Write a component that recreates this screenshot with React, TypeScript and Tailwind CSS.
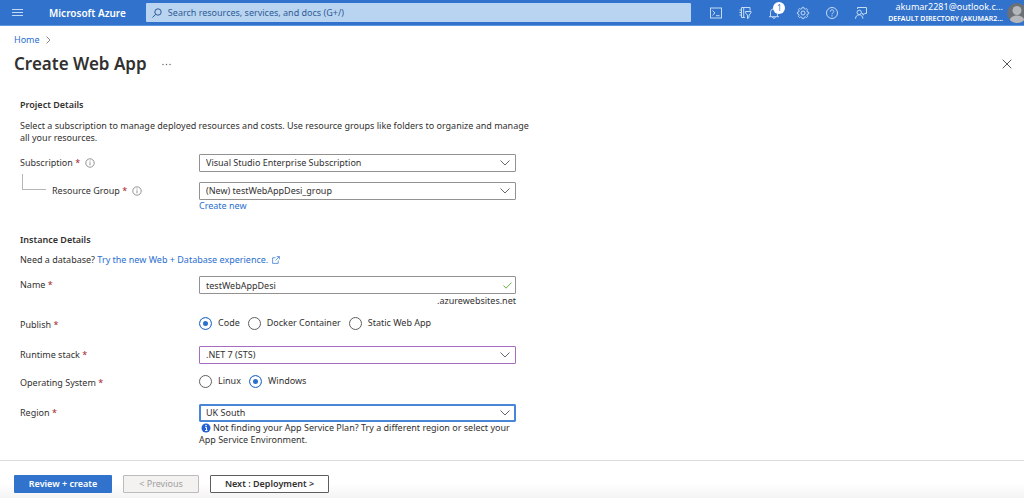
import { useState } from 'react';
import type { ReactNode } from 'react';
import clsx from 'clsx';

const iconProps = {
  fill: 'none',
  stroke: 'currentColor',
  strokeWidth: 1,
  'aria-hidden': true,
} as const;

function HeaderIcons() {
  return (
    <div className="flex items-center gap-[15px] text-[#c6dbf5]">
      <button type="button" aria-label="Cloud Shell">
        <svg {...iconProps} viewBox="0 0 14 14" className="size-[14px]">
          <rect x="1.5" y="2" width="11" height="10" />
          <path d="M3.5 4.5 6 7 3.5 9.3M7 9.7h3.6" />
        </svg>
      </button>
      <button type="button" aria-label="Directories and subscriptions">
        <svg {...iconProps} viewBox="0 0 14 14" className="size-[14px]">
          <path d="M7 11.500H3.500v-10h8.500v3M5.700 1.500v10M1.500 4h2M1.500 6.500h2M1.500 9h2" />
          <path d="M7.500 5.500h5.500v1.400l-2 2.200v2.400l-1.500 1V9.100l-2-2.200z" />
        </svg>
      </button>
      <button type="button" aria-label="Notifications" className="relative">
        <svg {...iconProps} viewBox="0 0 14 14" className="size-[14px]">
          <path d="M2 10.7h10M3.5 10.5V6.2a3.4 3.4 0 0 1 6.9 0v4.3M5.5 11c.1 1.8 2.8 1.8 2.9 0" />
        </svg>
        <span className="absolute -top-1 left-[6px] flex size-3 items-center justify-center rounded-full bg-white text-[8px] text-[#3173cc]">
          1
        </span>
      </button>
      <button type="button" aria-label="Settings">
        <svg {...iconProps} viewBox="0 0 14 14" className="size-[14px]">
          <path d="m5.9 2.7.3-1.3h1.6l.3 1.3 1.2.5 1.1-.7 1.2 1.2-.7 1.1.5 1.2 1.3.3v1.5l-1.3.3-.5 1.2.7 1.1-1.2 1.2-1.1-.7-1.2.5-.3 1.2H6.2l-.3-1.2-1.2-.5-1.1.7-1.2-1.2.7-1.1-.5-1.2-1.2-.3V6.3L2.6 6l.5-1.2-.7-1.1 1.2-1.2 1.1.7z" />
          <circle cx="7" cy="7" r="2" />
        </svg>
      </button>
      <button type="button" aria-label="Help">
        <svg {...iconProps} viewBox="0 0 14 14" className="size-[14px]">
          <circle cx="7" cy="7" r="5.5" />
          <path d="M5.2 5.6c0-2.4 3.6-2.3 3.6-.1C8.8 6.9 7 6.8 7 8.4M7 9.3v1.2" />
        </svg>
      </button>
      <button type="button" aria-label="Feedback">
        <svg {...iconProps} viewBox="0 0 14 14" className="size-[14px]">
          <circle cx="5.2" cy="6.4" r="2.2" />
          <path d="M1.5 12.7c.2-5.2 7.2-5.2 7.4 0M3.5 3V1.500h9v6h-1.700L9 9.200V7.500H8" />
        </svg>
      </button>
    </div>
  );
}

function Header() {
  return (
    <header className="flex h-[26px] items-center overflow-hidden border-b border-[#5e97de] bg-[#3173cc] text-white">
      <button type="button" aria-label="Show portal menu" className="ml-3 text-[#c3daf5]">
        <svg {...iconProps} viewBox="0 0 11 9" className="h-[9px] w-[11px]">
          <path d="M0 1.5h11M0 4.5h11M0 7.5h11" />
        </svg>
      </button>
      <a href="#" className="ml-[26px] text-[10px] font-semibold whitespace-nowrap">
        Microsoft Azure
      </a>
      <label className="ml-5 flex h-[19px] min-w-0 flex-1 items-center gap-[6px] rounded-[1px] bg-[#b9d4f0] px-[6px] text-[#2f5c96]">
        <svg {...iconProps} viewBox="0 0 10 10" className="size-[10px] shrink-0">
          <circle cx="6" cy="4" r="3.2" />
          <path d="M3.6 6.3.5 9.5" />
        </svg>
        <input
          type="text"
          aria-label="Search"
          placeholder="Search resources, services, and docs (G+/)"
          className="min-w-0 flex-1 bg-transparent text-[9px] outline-none placeholder:text-[#2f5c96]"
        />
      </label>
      <div className="ml-[18px]">
        <HeaderIcons />
      </div>
      <button type="button" className="ml-5 flex shrink-0 items-center gap-1">
        <span className="flex flex-col text-right whitespace-nowrap">
          <span className="text-[9px] leading-[12px]">akumar2281@outlook.c...</span>
          <span className="text-[7px] leading-[11px] font-semibold">
            DEFAULT DIRECTORY (AKUMAR2...
          </span>
        </span>
        <svg viewBox="0 0 20 20" className="-mr-[3px] size-5" aria-hidden="true">
          <circle cx="10" cy="10" r="10" fill="#6b6f76" />
          <circle cx="10" cy="7.5" r="4.5" fill="#b4b6b9" />
          <path d="M2.8 17c1-6 13.400-6 14.400 0A10 10 0 0 1 2.800 17" fill="#b4b6b9" />
        </svg>
      </button>
    </header>
  );
}

function InfoIcon() {
  return (
    <svg {...iconProps} viewBox="0 0 10 10" className="ml-[5px] size-[10px] text-[#77797b]">
      <circle cx="5" cy="5" r="4.2" strokeWidth=".8" />
      <path d="M5 4.3v3M5 2.5v1" strokeWidth=".8" />
    </svg>
  );
}

type RowProps = {
  label: string;
  htmlFor?: string;
  info?: boolean;
  nested?: boolean;
  className?: string;
  children: ReactNode;
};

function Row({ label, htmlFor, info, nested, className, children }: RowProps) {
  const text = (
    <>
      {label} <span className="text-[#a4262c]">*</span>
    </>
  );
  return (
    <div className={clsx('flex items-start', className)}>
      <div className="flex h-[18px] w-[179px] shrink-0 items-center">
        {nested && (
          <span className="mr-[6px] ml-[2px] h-4 w-6 -translate-y-[9px] border-b border-l border-[#b5b5b5]" />
        )}
        {htmlFor ? <label htmlFor={htmlFor}>{text}</label> : <span>{text}</span>}
        {info && <InfoIcon />}
      </div>
      <div className="min-w-0 flex-1">{children}</div>
    </div>
  );
}

type SelectProps = { id: string; options: string[]; className: string };

function Select({ id, options, className }: SelectProps) {
  return (
    <div className="relative">
      <select
        id={id}
        className={clsx(
          'block h-[18px] w-full appearance-none rounded-[1px] border bg-white px-[6px] outline-none',
          className,
        )}
      >
        {options.map((o) => (
          <option key={o}>{o}</option>
        ))}
      </select>
      <svg
        {...iconProps}
        viewBox="0 0 10 6"
        className="pointer-events-none absolute top-[6px] right-[6px] h-[6px] w-[10px] text-[#666]"
      >
        <path d="m.5.5 4.5 4.5L9.5.5" />
      </svg>
    </div>
  );
}

type RadiosProps = { name: string; options: string[]; initial: string };

function Radios({ name, options, initial }: RadiosProps) {
  const [value, setValue] = useState(initial);
  return (
    <div role="radiogroup" aria-label={name} className="flex h-[14px] items-center gap-2">
      {options.map((o) => (
        <label key={o} className="flex items-center gap-[6px]">
          <input
            type="radio"
            name={name}
            checked={value === o}
            onChange={() => setValue(o)}
            className="size-[13px] appearance-none rounded-full border border-[#605e5c] checked:border-[#3173cc] checked:bg-[#2b70cc] checked:shadow-[inset_0_0_0_3px_#fff]"
          />
          {o}
        </label>
      ))}
    </div>
  );
}

export default function App() {
  const [name, setName] = useState('testWebAppDesi');

  return (
    <div className="flex min-h-screen flex-col bg-white font-['Noto_Sans','Segoe_UI',sans-serif] text-[9px] leading-[12px] text-[#323130]">
      <Header />

      <nav className="flex h-7 items-center gap-[6px] px-[14px] text-[#2a6fd0]">
        <a href="#" className="text-[9px]">
          Home
        </a>
        <svg {...iconProps} viewBox="0 0 5 8" className="h-2 w-[5px] text-[#8a8886]">
          <path d="m.5.5 3.5 3.5L.5 7.5" />
        </svg>
      </nav>

      <div className="flex h-5 items-center pr-3 pl-[14px]">
        <h1 className="text-[17px] font-semibold">Create Web App</h1>
        <button type="button" aria-label="More" className="ml-[15px] text-[#605e5c]">
          <svg viewBox="0 0 9 3" className="h-[3px] w-[9px]" fill="currentColor" aria-hidden="true">
            <circle cx="1" cy="1.5" r=".7" />
            <circle cx="4.5" cy="1.5" r=".7" />
            <circle cx="8" cy="1.5" r=".7" />
          </svg>
        </button>
        <button type="button" aria-label="Close" className="ml-auto text-[#555]">
          <svg {...iconProps} viewBox="0 0 10 10" className="size-[10px]">
            <path d="m.7.7 8.6 8.6M9.3.7.7 9.3" />
          </svg>
        </button>
      </div>

      <main className="max-w-[536px] flex-1 px-5 pt-[25px] pb-3">
        <h2 className="font-semibold">Project Details</h2>
        <p className="-mr-4 mt-[9px]">
          Select a subscription to manage deployed resources and costs. Use resource groups like
          folders to organize and manage all your resources.
        </p>

        <Row label="Subscription" htmlFor="subscription" info className="mt-[10px]">
          <Select
            id="subscription"
            options={['Visual Studio Enterprise Subscription']}
            className="border-[#949290]"
          />
        </Row>
        <Row label="Resource Group" htmlFor="group" info nested className="mt-[10px]">
          <Select
            id="group"
            options={['(New) testWebAppDesi_group']}
            className="border-[#949290]"
          />
          <a href="#" className="block w-fit text-[#2a6fd0]">
            Create new
          </a>
        </Row>

        <h2 className="mt-[22px] font-semibold">Instance Details</h2>
        <p className="mt-2">
          Need a database?{' '}
          <a href="#" className="text-[#2a6fd0]">
            Try the new Web + Database experience.
            <svg {...iconProps} viewBox="0 0 9 9" className="ml-1 inline size-2 align-[-1px]">
              <path d="M4 2H.7v6.3H7V5M5.3.7h3v3M8.3.7 4 5" strokeWidth=".8" />
            </svg>
          </a>
        </p>

        <Row label="Name" htmlFor="name" className="mt-[10px]">
          <div className="relative">
            <input
              id="name"
              type="text"
              value={name}
              onChange={(e) => setName(e.target.value)}
              className="block h-[18px] w-full rounded-[1px] border border-[#949290] px-[6px] outline-none"
            />
            <svg
              {...iconProps}
              viewBox="0 0 9 7"
              className="pointer-events-none absolute top-[6px] right-1 h-[7px] w-[9px] text-[#6bb04a]"
            >
              <path d="m.5 3.5 2.5 2.7L8.5.6" />
            </svg>
          </div>
          <p className="mt-[1px] text-right">.azurewebsites.net</p>
        </Row>

        <Row label="Publish" className="mt-[9px]">
          <Radios
            name="Publish"
            options={['Code', 'Docker Container', 'Static Web App']}
            initial="Code"
          />
        </Row>
        <Row label="Runtime stack" htmlFor="runtime" className="mt-3">
          <Select id="runtime" options={['.NET 7 (STS)']} className="border-[#a56cc0]" />
        </Row>
        <Row label="Operating System" className="mt-[10px]">
          <Radios name="Operating System" options={['Linux', 'Windows']} initial="Windows" />
        </Row>
        <Row label="Region" htmlFor="region" className="mt-3">
          <Select
            id="region"
            options={['UK South']}
            className="border-[#4a86d6] ring-1 ring-[#4a86d6] ring-inset"
          />
          <p>
            <svg viewBox="0 0 10 10" className="mx-[2px] inline size-[10px] align-[-2px]" aria-hidden="true">
              <circle cx="5" cy="5" r="4.5" fill="#2160d8" />
              <path d="M4 4.3h1.5v3M4 7.5h2.5" stroke="#fff" fill="none" />
              <circle cx="5" cy="2.5" r=".8" fill="#fff" />
            </svg>
            Not finding your App Service Plan? Try a different region or select your App Service
            Environment.
          </p>
        </Row>
      </main>

      <footer className="flex gap-[11px] border-t border-[#dddcdb] bg-linear-to-b from-white from-60% to-[#f4f4f4] px-[14px] pt-[14px] pb-[5px] font-semibold">
        <button type="button" className="h-[18px] w-[98px] rounded-[1px] bg-[#3173cc] text-white">
          Review + create
        </button>
        <button
          type="button"
          disabled
          className="h-[18px] w-[76px] rounded-[1px] border border-[#bdbbb9] bg-[#f3f2f1] font-normal text-[#a19f9d]"
        >
          &lt; Previous
        </button>
        <button type="button" className="h-[18px] w-[119px] rounded-[1px] border border-[#605e5c] bg-white">
          Next : Deployment &gt;
        </button>
      </footer>
    </div>
  );
}
